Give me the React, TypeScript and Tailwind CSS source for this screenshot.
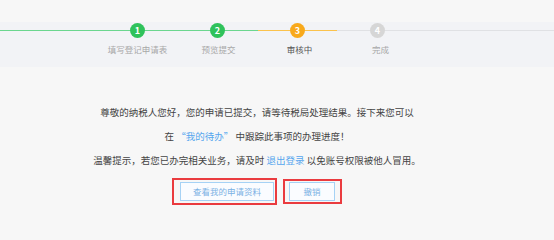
import React from 'react';

const font = { fontFamily: '"Noto Sans CJK SC", "Noto Sans", sans-serif' };

const steps = [
  { n: 1, label: '填写登记申请表', state: 'done' },
  { n: 2, label: '预览提交', state: 'done' },
  { n: 3, label: '审核中', state: 'active' },
  { n: 4, label: '完成', state: 'todo' },
];

function Dot({ n, state }: { n: number; state: string }) {
  const color =
    state === 'done' ? 'bg-[#2fc25b]' : state === 'active' ? 'bg-[#f8a91b]' : 'bg-[#d6d6d6]';
  return (
    <div
      className={`flex h-[15px] w-[15px] shrink-0 items-center justify-center rounded-full text-[9px] font-bold leading-none text-white ${color}`}
    >
      {n}
    </div>
  );
}

export default function App() {
  return (
    <div className="h-[240px] w-[554px] overflow-hidden bg-[#f7f7f7] text-[#444]" style={font}>
      <div className="h-[22px] bg-[#f7f7f7]" />

      <div className="h-[45px] bg-[#f2f3f6] pt-[1px]">
        <div className="flex h-[15px] items-center">
          <div className="h-[1.5px] w-[130px] bg-[#6bd68f]" />
          <Dot n={1} state="done" />
          <div className="h-[1.5px] w-[65px] bg-[#6bd68f]" />
          <Dot n={2} state="done" />
          <div className="h-[1.5px] w-[33px] bg-[#6bd68f]" />
          <div className="h-[1.5px] w-[32px] bg-[#fbc24c]" />
          <Dot n={3} state="active" />
          <div className="h-[1.5px] w-[32px] bg-[#fbc24c]" />
          <div className="h-[1.5px] w-[33px] bg-[#e0e1e4]" />
          <Dot n={4} state="todo" />
          <div className="h-[1.5px] flex-1 bg-[#e0e1e4]" />
        </div>
        <div className="mt-[5px] flex pl-[97px]">
          {steps.map((s) => (
            <div
              key={s.n}
              className={`w-[81px] text-center text-[8.5px] leading-[12px] ${
                s.state === 'active' ? 'text-[#555]' : 'text-[#a8a8a8]'
              }`}
            >
              {s.label}
            </div>
          ))}
        </div>
      </div>

      <div className="w-[514px] pt-[33px] text-center text-[9.5px] leading-[24px] text-[#444]">
        <p>尊敬的纳税人您好，您的申请已提交，请等待税局处理结果。接下来您可以</p>
        <p>
          在 <span className="text-[#55a6ee]">“我的待办”</span> 中跟踪此事项的办理进度！
        </p>
        <p>
          温馨提示，若您已办完相关业务，请及时 <span className="text-[#55a6ee]">退出登录</span>{' '}
          以免账号权限被他人冒用。
        </p>

        <div className="mt-[6px] flex items-start justify-center gap-[6px]">
          <div className="h-[27px] w-[105px] border-2 border-[#ea3b3f] pl-[6px] pt-[2px]">
            <button className="flex h-[19px] w-[94px] items-center justify-center border border-[#a6d2f5] bg-[#fafcff] text-[8.5px] leading-none text-[#7ab1e4]">
              查看我的申请资料
            </button>
          </div>
          <div className="mt-[1px] h-[25px] w-[59px] border-2 border-[#ea3b3f] pl-[4px] pt-[1px]">
            <button className="flex h-[19px] w-[46px] items-center justify-center border border-[#a6d2f5] bg-[#fafcff] text-[8.5px] leading-none text-[#7ab1e4]">
              撤销
            </button>
          </div>
        </div>
      </div>
    </div>
  );
}
